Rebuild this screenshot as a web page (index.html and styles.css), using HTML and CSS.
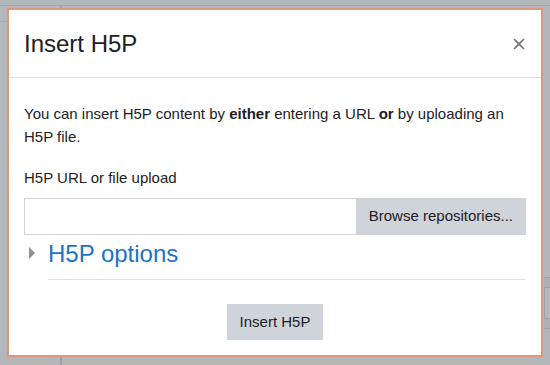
FILE: index.html
```html
<!DOCTYPE html>
<html lang="en">
<head>
  <meta charset="UTF-8" />
  <meta name="viewport" content="width=device-width, initial-scale=1.0" />
  <title>Insert H5P</title>
  <link rel="stylesheet" href="styles.css">
</head>
<body>

  <!-- page behind the dialog -->
  <div class="page">
    <div class="page-nav"></div>
    <div class="page-row">
      <div class="page-side">
        <div class="page-side-head"></div>
      </div>
      <div class="page-body">
        <div class="page-widget">
          <div class="page-widget-cell"></div>
        </div>
      </div>
    </div>
  </div>

  <div class="modal" role="dialog">
    <div class="modal-header">
      <h5 class="modal-title">Insert H5P</h5>
      <button class="close" aria-label="Close">
        <svg width="12" height="12" viewBox="0 0 12 12">
          <path d="M1 1 L11 11 M11 1 L1 11" stroke="#6a7178" stroke-width="1.7" fill="none" />
        </svg>
      </button>
    </div>

    <div class="modal-body">
      <p class="intro">You can insert H5P content by <strong>either</strong> entering a URL <strong>or</strong> by uploading an H5P file.</p>

      <label class="field-label" for="h5p-url">H5P URL or file upload</label>
      <div class="input-group">
        <input type="text" id="h5p-url" />
        <button class="btn">Browse repositories...</button>
      </div>

      <div class="options">
        <span class="caret"></span>
        <a href="#" class="options-link">H5P options</a>
      </div>
      <div class="options-rule"></div>
    </div>

    <div class="modal-footer">
      <button class="btn">Insert H5P</button>
    </div>
  </div>

</body>
</html>
```

FILE: styles.css
```css
* {
  box-sizing: border-box;
  margin: 0;
  font-family: 'Liberation Sans', Arial, sans-serif;
}

body {
  background-color: #b4b7ba;
  height: 100vh;
  overflow: hidden;
}

/* page under the backdrop */
.page {
  height: 100%;
  display: flex;
  flex-direction: column;
}

.page-nav {
  height: 6px;
  border-bottom: 1px solid #a3a6a9;
}

.page-row {
  flex: 1;
  display: flex;
}

.page-side {
  width: 62px;
  border-right: 2px solid #9fa3a7;
}

.page-side-head {
  height: 16px;
  border-bottom: 1px solid #a3a6a9;
}

.page-body {
  flex: 1;
  display: flex;
  justify-content: flex-end;
}

.page-widget {
  margin-top: 271px;
  width: 6px;
  height: 52px;
  background: #adb0b3;
  border-top: 1px solid #9ea2a6;
  border-bottom: 1px solid #9ea2a6;
  padding: 9px 0;
}

.page-widget-cell {
  height: 100%;
  background: #b4b7ba;
  border-top: 1px solid #9ea2a6;
  border-bottom: 1px solid #9ea2a6;
  border-left: 1px solid #9ea2a6;
}

/* dialog */
.modal {
  position: fixed;
  top: 8px;
  left: 7px;
  width: 536px;
  background: #fff;
  border: 2px solid #e0977f;
  color: #1d2125;
}

.modal-header {
  display: flex;
  align-items: center;
  justify-content: space-between;
  padding: 16px 16px 15px 15px;
  border-bottom: 1px solid #dee2e6;
}

.modal-title {
  font-size: 24px;
  font-weight: normal;
  line-height: 36px;
}

.close {
  border: none;
  background: none;
  padding: 0;
  width: 12px;
  height: 12px;
  display: flex;
  cursor: pointer;
}

.modal-body {
  padding: 25px 15px 0;
  font-size: 15px;
  line-height: 22.5px;
}

.intro {
  margin-bottom: 19px;
}

.field-label {
  display: block;
  margin-bottom: 8px;
}

.input-group {
  display: flex;
  height: 37px;
}

.input-group input {
  flex: 1;
  border: 1px solid #ced4da;
  border-right: none;
  outline: none;
  font-size: 15px;
  padding: 6px 12px;
}

.btn {
  background: #ced4da;
  border: 1px solid #ced4da;
  color: #1d2125;
  font-size: 15px;
  line-height: 22.5px;
  padding: 6px 12px;
  cursor: pointer;
}

.options {
  display: flex;
  align-items: center;
  margin-top: 4px;
  height: 29px;
}

.caret {
  width: 0;
  height: 0;
  border-top: 6px solid transparent;
  border-bottom: 6px solid transparent;
  border-left: 6px solid #8c9196;
  margin: 0 13px 0 5px;
}

.options-link {
  font-size: 24px;
  line-height: 29px;
  color: #1a73c9;
  text-decoration: none;
}

.options-rule {
  margin: 11px 0 0 24px;
  border-top: 1px solid #dee2e6;
}

.modal-footer {
  display: flex;
  justify-content: center;
  padding: 24px 15px 15px;
}

.modal-footer .btn {
  height: 36px;
}
```
